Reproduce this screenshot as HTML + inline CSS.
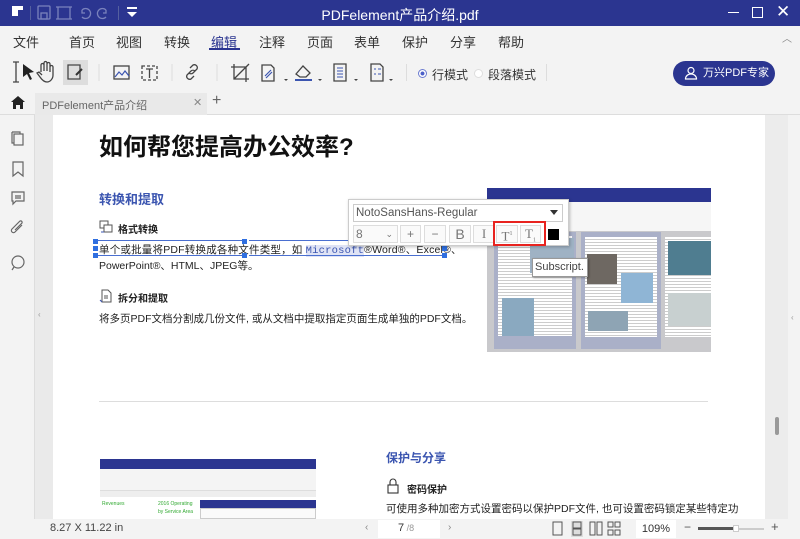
<!DOCTYPE html>
<html><head><meta charset="utf-8"><style>
*{margin:0;padding:0;box-sizing:border-box}
body{width:800px;height:539px;overflow:hidden;font-family:"Liberation Sans","Noto Sans CJK SC",sans-serif;background:#f3f3f3;position:relative;color:#333}
.a{position:absolute}
.title{left:0;top:0;width:800px;height:26px;background:#2b3590;color:#fff}
.menu{top:26px;left:0;width:800px;height:26px;background:#f3f3f3;font-size:13px;color:#333}
.menu span{position:absolute;top:6px}
.ic{stroke:#444;fill:none;stroke-width:1.3}
.pg{left:53px;top:115px;width:712px;height:404px;background:#fff;overflow:hidden}
.t{position:absolute;white-space:nowrap}
.btn{position:absolute;top:225px;height:18px;border:1px solid #ddd;background:#fafafa;font-size:12px;color:#777;text-align:center;line-height:16px}
</style></head><body>
<div class="a title">
 <div class="a" style="left:12px;top:6px;width:11px;height:4px;background:#fff"></div>
 <div class="a" style="left:12px;top:10px;width:6px;height:6px;background:#fff"></div>
 <div class="a" style="left:30px;top:6px;width:1px;height:14px;background:#55609f"></div>
 <svg class="a" style="left:36px;top:4px" width="110" height="18"><g stroke="#7a82bc" fill="none" stroke-width="1.3"><rect x="2" y="2" width="12" height="13" rx="1"/><rect x="5" y="9" width="6" height="6"/><path d="M22 3h12v12h-12zM20 3h16M20 15h16"/><path d="M46 6a5 5 0 1 1 0 7M46 6v3h3"/><path d="M70 6a5 5 0 1 0 0 7M70 6v3h-3"/></g></svg>
 <div class="a" style="left:118px;top:6px;width:1px;height:14px;background:#55609f"></div>
 <svg class="a" style="left:126px;top:7px" width="12" height="12"><path d="M1 1h10" stroke="#fff" stroke-width="2"/><path d="M1 5h10l-5 5z" fill="#fff"/></svg>
 <div class="t" style="left:0;width:800px;text-align:center;top:5px;font-size:14px">PDFelement产品介绍.pdf</div>
 <div class="a" style="left:728px;top:12px;width:11px;height:1px;background:#fff"></div>
 <div class="a" style="left:752px;top:7px;width:11px;height:11px;border:1.3px solid #fff"></div>
 <div class="t" style="left:776px;top:2px;font-size:17px;color:#fff">✕</div>
</div>
<div class="a menu">
 <span style="left:13px">文件</span><span style="left:69px">首页</span><span style="left:116px">视图</span><span style="left:164px">转换</span><span style="left:211px;color:#2b3590">编辑</span><span style="left:259px">注释</span><span style="left:307px">页面</span><span style="left:354px">表单</span><span style="left:402px">保护</span><span style="left:450px">分享</span><span style="left:498px">帮助</span>
 <div class="a" style="left:209px;top:22px;width:31px;height:2px;background:#2b3590"></div>
 <div class="t" style="left:782px;top:4px;font-size:10px;color:#888">︿</div>
</div>
<svg class="a" style="left:10px;top:60px" width="400" height="26">
 <g class="ic"><path d="M6 2v20M3 2h6M3 22h6"/></g>
 <path d="M13 4l11 8-5 1 3 6-2 1-3-6-4 3z" fill="#222"/>
 <path class="ic" d="M31 12v-7a1.5 1.5 0 0 1 3 0v6M34 10v-7a1.5 1.5 0 0 1 3 0v8M37 10v-6a1.5 1.5 0 0 1 3 0v8M40 11v-4a1.5 1.5 0 0 1 3 0v8c0 4-3 7-6 7s-5-2-7-5l-3-4 2-1 3 3"/>
 <rect x="53" y="0" width="25" height="25" fill="#ddd"/>
 <path class="ic" d="M58 5h12v14h-12z" stroke-width="1.6"/><path d="M66 15l6-6" stroke="#333" stroke-width="2"/>
 <line x1="89" y1="4" x2="89" y2="21" stroke="#ddd"/>
 <rect class="ic" x="104" y="6" width="15" height="13"/><path d="M105 17l4-5 3 3 3-4 4 5" stroke="#3b55b0" fill="none" stroke-width="1.2"/>
 <rect class="ic" x="132" y="6" width="15" height="14" stroke-dasharray="3 2"/><path d="M136 9h7M139.5 9v9" class="ic"/>
 <line x1="162" y1="4" x2="162" y2="21" stroke="#ddd"/>
 <path class="ic" d="M180 8l3-3a3 3 0 0 1 4 4l-4 4a3 3 0 0 1-4 0M184 16l-3 3a3 3 0 0 1-4-4l4-4a3 3 0 0 1 4 0"/>
 <line x1="207" y1="4" x2="207" y2="21" stroke="#ddd"/>
 <path class="ic" d="M224 4v15h15M221 7h15v15M224 19l15-15"/>
 <path class="ic" d="M252 5h9l3 3v13h-12z"/><path d="M255 16l6-6M256 18l6-6" stroke="#3b55b0" stroke-width="1.2"/><path d="M274 19h4l-2 2z" fill="#444"/>
 <path class="ic" d="M286 14l7-8 7 7-4 4h-6z"/><line x1="285" y1="20" x2="302" y2="20" stroke="#3b55b0" stroke-width="2"/><path d="M308 19h4l-2 2z" fill="#444"/>
 <path class="ic" d="M324 4h12v17h-12z"/><path d="M327 8h6M327 11h6M327 14h6M327 17h6" stroke="#3b55b0"/><path d="M344 19h4l-2 2z" fill="#444"/>
 <path class="ic" d="M361 4h9l3 3v14h-12z"/><path d="M364 9h2M364 14h2M368 9h3M368 14h3" stroke="#3b55b0"/><path d="M379 19h4l-2 2z" fill="#444"/>
</svg>
<div class="a" style="left:406px;top:64px;width:1px;height:17px;background:#ddd"></div>
<div class="a" style="left:418px;top:69px;width:9px;height:9px;border-radius:50%;border:1px solid #6b7bd0;background:radial-gradient(#4b5fc8 35%,#fff 45%)"></div>
<div class="t" style="left:432px;top:66px;font-size:12px">行模式</div>
<div class="a" style="left:474px;top:69px;width:9px;height:9px;border-radius:50%;border:1px solid #ddd;background:#fff"></div>
<div class="t" style="left:488px;top:66px;font-size:12px">段落模式</div>
<div class="a" style="left:546px;top:64px;width:1px;height:17px;background:#ddd"></div>
<div class="a" style="left:673px;top:61px;width:102px;height:25px;border-radius:13px;background:#2b3590;color:#fff;font-size:11px;line-height:25px;padding-left:30px">万兴PDF专家</div>
<svg class="a" style="left:684px;top:66px" width="14" height="14"><circle cx="7" cy="4.5" r="3" stroke="#fff" fill="none" stroke-width="1.2"/><path d="M1.5 13c0-3 2.5-5 5.5-5s5.5 2 5.5 5z" stroke="#fff" fill="none" stroke-width="1.2"/></svg>
<!-- tabs -->
<div class="a" style="left:0;top:92px;width:800px;height:23px;background:#f3f3f3;border-bottom:1px solid #ddd"></div>
<svg class="a" style="left:11px;top:96px" width="14" height="13"><path d="M7 0l7 6h-2v7h-3v-4h-4v4h-3v-7h-2z" fill="#222"/></svg>
<div class="a" style="left:35px;top:93px;width:172px;height:22px;background:#e9e9e9"></div>
<div class="t" style="left:42px;top:97px;font-size:11px;color:#666">PDFelement产品介绍</div>
<div class="t" style="left:193px;top:96px;font-size:11px;color:#888">✕</div>
<div class="t" style="left:212px;top:92px;font-size:16px;color:#666">+</div>
<!-- left sidebar -->
<div class="a" style="left:0;top:115px;width:35px;height:404px;background:#f3f3f3;border-right:1px solid #ddd"></div>
<div class="a" style="left:35px;top:115px;width:18px;height:404px;background:#eaeaea"></div>
<div class="t" style="left:38px;top:310px;font-size:8px;color:#999">‹</div>
<svg class="a" style="left:9px;top:130px" width="18" height="145"><g stroke="#666" fill="none" stroke-width="1.2"><path d="M3 2h8v2M3 2v11h2"/><rect x="5" y="4" width="9" height="11"/><path d="M4 32h10v14l-5-4-5 4z"/><path d="M3 62h12v9h-8l-3 3v-3h-1z"/><path d="M6 66h6M6 68h6"/><path d="M13 95l-7 7a2 2 0 0 1-3-3l8-8a1.5 1.5 0 0 1 2 2l-7 7"/><circle cx="9" cy="132" r="6"/><path d="M5 137l-2 3"/></g></svg>
<!-- right area -->
<div class="a" style="left:765px;top:115px;width:23px;height:404px;background:#ececec"></div>
<div class="a" style="left:788px;top:115px;width:12px;height:404px;background:#f3f3f3"></div>
<div class="t" style="left:791px;top:313px;font-size:8px;color:#999">‹</div>
<div class="a" style="left:775px;top:417px;width:4px;height:18px;background:#999;border-radius:2px"></div>
<!-- page -->
<div class="a pg">
 <div class="t" style="left:46px;top:12px;font-size:24px;font-weight:bold;color:#111">如何帮您提高办公效率?</div>
 <div class="t" style="left:46px;top:74px;font-size:13px;font-weight:bold;color:#3b55b0">转换和提取</div>
 <svg class="a" style="left:46px;top:105px" width="14" height="14"><g stroke="#555" fill="none"><rect x="1" y="1" width="8" height="7"/><rect x="5" y="5" width="8" height="7" fill="#fff"/><path d="M2 12h3" stroke="#3b55b0"/></g></svg>
 <div class="t" style="left:65px;top:106px;font-size:10px;font-weight:bold;color:#222">格式转换</div>
 <div class="t" style="left:46px;top:127px;font-size:10.5px;color:#222;letter-spacing:.2px">单个或批量将PDF转换成各种文件类型，如 <span style="background:#dfe3f5;font-family:'Liberation Mono',monospace;color:#3b55b0">Microsoft</span>®Word®、Excel®、</div>
 <div class="t" style="left:46px;top:143px;font-size:10.5px;color:#222">PowerPoint®、HTML、JPEG等。</div>
 <div class="a" style="left:44px;top:125px;width:148px;height:1px;background:#4a6fd0"></div>
 <div class="a" style="left:196px;top:125px;width:196px;height:1px;background:#4a6fd0"></div>
 <div class="a" style="left:44px;top:140px;width:148px;height:1px;background:#4a6fd0"></div>
 <div class="a" style="left:196px;top:140px;width:196px;height:1px;background:#4a6fd0"></div>
 <div class="a" style="left:40px;top:124px;width:5px;height:5px;background:#2f6fe0"></div>
 <div class="a" style="left:40px;top:131px;width:5px;height:5px;background:#2f6fe0"></div>
 <div class="a" style="left:40px;top:138px;width:5px;height:5px;background:#2f6fe0"></div>
 <div class="a" style="left:189px;top:124px;width:5px;height:5px;background:#2f6fe0"></div>
 <div class="a" style="left:189px;top:138px;width:5px;height:5px;background:#2f6fe0"></div>
 <div class="a" style="left:389px;top:131px;width:5px;height:5px;background:#2f6fe0"></div>
 <div class="a" style="left:389px;top:138px;width:5px;height:5px;background:#2f6fe0"></div>
 <svg class="a" style="left:46px;top:174px" width="14" height="14"><g stroke="#555" fill="none"><path d="M3 1h6l3 3v9h-9z"/><path d="M5 7h4M5 9h4" /><path d="M1 11l2 2" stroke="#3b55b0"/></g></svg>
 <div class="t" style="left:65px;top:175px;font-size:10px;font-weight:bold;color:#222">拆分和提取</div>
 <div class="t" style="left:46px;top:196px;font-size:10.5px;color:#222">将多页PDF文档分割成几份文件, 或从文档中提取指定页面生成单独的PDF文档。</div>
 <!-- image top right -->
 <div class="a" style="left:434px;top:73px;width:224px;height:164px;background:#c9c9cc">
  <div class="a" style="left:0;top:0;width:224px;height:14px;background:#2b3590"></div>
  <div class="a" style="left:0;top:14px;width:224px;height:29px;background:#f6f6f6"></div>
  <div class="a" style="left:7px;top:44px;width:82px;height:117px;background:#aab0c8"></div>
  <div class="a" style="left:11px;top:48px;width:74px;height:100px;background:#fff;background-image:repeating-linear-gradient(#fff 0 2px,#ccc 2px 3px)"></div>
  <div class="a" style="left:43px;top:50px;width:44px;height:35px;background:#9fb2c4"></div>
  <div class="a" style="left:15px;top:110px;width:32px;height:38px;background:#8aa9c0"></div>
  <div class="a" style="left:94px;top:44px;width:80px;height:117px;background:#aab0c8"></div>
  <div class="a" style="left:98px;top:49px;width:72px;height:100px;background:#fff;background-image:repeating-linear-gradient(#fff 0 2px,#ccc 2px 3px)"></div>
  <div class="a" style="left:100px;top:66px;width:30px;height:30px;background:#6e6862"></div>
  <div class="a" style="left:134px;top:85px;width:32px;height:30px;background:#8fb5d5"></div>
  <div class="a" style="left:101px;top:123px;width:40px;height:20px;background:#8ea4b4"></div>
  <div class="a" style="left:178px;top:49px;width:46px;height:100px;background:#fff;background-image:repeating-linear-gradient(#fff 0 2px,#ccc 2px 3px)"></div>
  <div class="a" style="left:181px;top:53px;width:43px;height:34px;background:#4f7d90"></div>
  <div class="a" style="left:181px;top:105px;width:43px;height:33px;background:#c8d0d0"></div>
 </div>
 <div class="a" style="left:46px;top:286px;width:609px;height:1px;background:#ddd"></div>
 <!-- bottom image -->
 <div class="a" style="left:47px;top:344px;width:216px;height:60px;background:#fff">
  <div class="a" style="left:0;top:0;width:216px;height:10px;background:#2b3590"></div>
  <div class="a" style="left:0;top:10px;width:216px;height:22px;background:#f4f4f4;border-bottom:1px solid #ddd"></div>
  <div class="a" style="left:0;top:32px;width:216px;height:6px;background:#eee"></div>
  <div class="a" style="left:100px;top:41px;width:116px;height:8px;background:#2b3590"></div>
  <div class="a" style="left:100px;top:49px;width:116px;height:11px;border:1px solid #ccc;background:#fafafa"></div>
  <div class="t" style="left:2px;top:42px;font-size:5px;color:#3a3">Revenues</div>
  <div class="t" style="left:58px;top:42px;font-size:5px;color:#3a3">2016 Operating</div>
  <div class="t" style="left:58px;top:50px;font-size:5px;color:#3a3">by Service Area</div>
 </div>
 <div class="t" style="left:333px;top:334px;font-size:12px;font-weight:bold;color:#3b55b0">保护与分享</div>
 <svg class="a" style="left:334px;top:363px" width="12" height="16"><g stroke="#333" fill="none" stroke-width="1.1"><path d="M3 7v-3a3 3 0 0 1 6 0v3"/><rect x="1" y="7" width="10" height="8"/></g></svg>
 <div class="t" style="left:354px;top:366px;font-size:10px;font-weight:bold;color:#222">密码保护</div>
 <div class="t" style="left:333px;top:386px;font-size:10.5px;color:#222">可使用多种加密方式设置密码以保护PDF文件, 也可设置密码锁定某些特定功</div>
</div>
<!-- popup -->
<div class="a" style="left:348px;top:199px;width:221px;height:47px;background:#fff;border:1px solid #ccc;box-shadow:1px 1px 3px rgba(0,0,0,.25)"></div>
<div class="a" style="left:353px;top:204px;width:210px;height:18px;border:1px solid #ccc;font-size:11.5px;color:#555;padding-left:2px;line-height:16px">NotoSansHans-Regular</div>
<svg class="a" style="left:550px;top:210px" width="8" height="5"><path d="M0 0h8l-4 5z" fill="#333"/></svg>
<div class="btn" style="left:353px;width:45px;text-align:left;padding-left:2px">8<span style="position:absolute;right:4px;font-size:9px">⌄</span></div>
<div class="btn" style="left:400px;width:21px">+</div>
<div class="btn" style="left:424px;width:22px">−</div>
<div class="btn" style="left:449px;width:22px;font-size:14px">B</div>
<div class="btn" style="left:473px;width:22px;font-family:'Liberation Serif',serif;font-size:13px">I</div>
<div class="btn" style="left:496px;width:22px;font-family:'Liberation Serif',serif;font-size:13px">T<sup style="font-size:6px">1</sup></div>
<div class="btn" style="left:520px;width:21px;font-family:'Liberation Serif',serif;font-size:13px">T<sub style="font-size:6px">1</sub></div>
<div class="a" style="left:548px;top:229px;width:11px;height:11px;background:#000"></div>
<div class="a" style="left:493px;top:221px;width:53px;height:25px;border:2px solid #e8231f"></div>
<div class="a" style="left:532px;top:258px;width:56px;height:19px;background:#fff;border:1px solid #999;box-shadow:1px 1px 2px rgba(0,0,0,.3);font-size:11px;color:#444;line-height:17px;padding-left:2px">Subscript.</div>
<!-- status bar -->
<div class="a" style="left:0;top:519px;width:800px;height:20px;background:#f3f3f3"></div>
<div class="t" style="left:50px;top:522px;font-size:11px;color:#444">8.27 X 11.22 in</div>
<div class="t" style="left:365px;top:522px;font-size:10px;color:#888">‹</div>
<div class="a" style="left:378px;top:520px;width:62px;height:18px;background:#fff"></div>
<div class="t" style="left:398px;top:522px;font-size:11px;color:#333">7<span style="color:#999;font-size:9px"> /8</span></div>
<div class="t" style="left:448px;top:522px;font-size:10px;color:#888">›</div>
<svg class="a" style="left:552px;top:521px" width="70" height="16"><g stroke="#555" fill="none"><rect x="1" y="1" width="9" height="13"/><rect x="19" y="0" width="12" height="16" fill="#ddd" stroke="none"/><rect x="21" y="1" width="8" height="6"/><rect x="21" y="8" width="8" height="6"/><rect x="38" y="1" width="5" height="13"/><rect x="45" y="1" width="5" height="13"/><rect x="56" y="1" width="5" height="5"/><rect x="63" y="1" width="5" height="5"/><rect x="56" y="9" width="5" height="5"/><rect x="63" y="9" width="5" height="5"/></g></svg>
<div class="a" style="left:636px;top:520px;width:40px;height:18px;background:#fff;font-size:11px;color:#333;text-align:center;line-height:18px">109%</div>
<div class="t" style="left:684px;top:520px;font-size:12px;color:#555">−</div>
<div class="a" style="left:698px;top:528px;width:66px;height:2px;background:#ccc"></div>
<div class="a" style="left:698px;top:527px;width:38px;height:3px;background:#555"></div>
<div class="a" style="left:733px;top:525px;width:6px;height:7px;background:#fff;border:1px solid #ccc"></div>
<div class="t" style="left:771px;top:519px;font-size:13px;color:#555">+</div>
</body></html>
